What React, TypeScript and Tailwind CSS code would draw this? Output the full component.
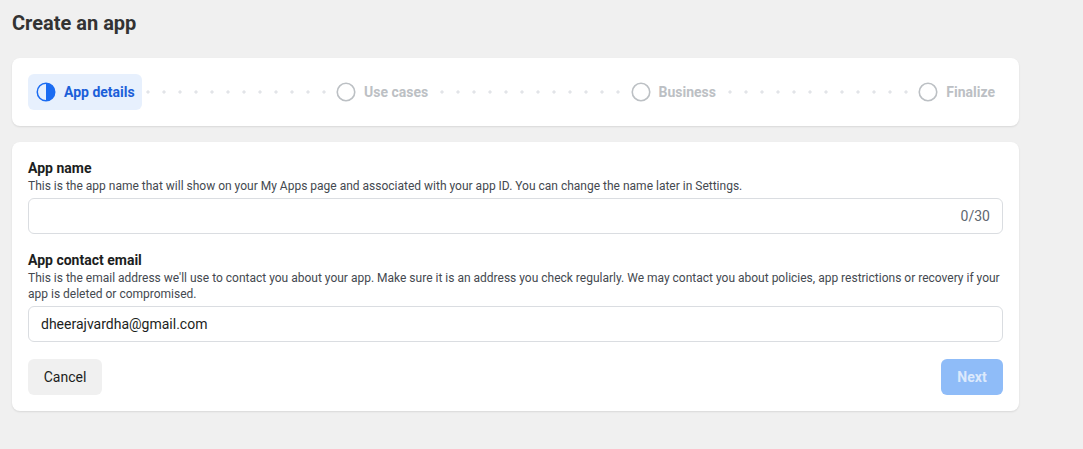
import React from "react";

function HalfCircle() {
  return (
    <svg width="20" height="20" viewBox="0 0 20 20">
      <circle cx="10" cy="10" r="8.75" fill="none" stroke="#1b6cf2" strokeWidth="1.5" />
      <path d="M10 1.25 A8.75 8.75 0 0 1 10 18.75 Z" fill="#1b6cf2" />
    </svg>
  );
}

function EmptyCircle() {
  return (
    <svg width="20" height="20" viewBox="0 0 20 20">
      <circle cx="10" cy="10" r="8.75" fill="none" stroke="#bcc0c4" strokeWidth="1.6" />
    </svg>
  );
}

function Dots() {
  return (
    <div className="flex-1 h-1 bg-[radial-gradient(circle,#e2e4e8_1.4px,transparent_1.8px)] bg-[length:16px_4px] bg-repeat-x bg-[position:-2px_center]" />
  );
}

function Step({ label }: { label: string }) {
  return (
    <div className="flex items-center gap-2 h-9 px-2">
      <EmptyCircle />
      <span className="text-[14px] font-bold text-[#bcc0c4]">{label}</span>
    </div>
  );
}

export default function App() {
  return (
    <div className="min-h-[449px] bg-[#f0f0f0] pl-3 pt-[10px] font-['Roboto',sans-serif]">
      <h1 className="text-[20px] leading-[26px] font-bold text-[#333]">Create an app</h1>

      {/* Stepper */}
      <div className="mt-[22px] w-[1007px] rounded-lg bg-white px-4 py-4 shadow-[0_1px_2px_rgba(0,0,0,0.1)]">
        <div className="flex items-center">
          <div className="flex items-center gap-2 h-9 pl-2 pr-[7px] rounded-md bg-[#e7f0fd]">
            <HalfCircle />
            <span className="text-[14px] font-bold text-[#1b5fd9]">App details</span>
          </div>
          <Dots />
          <Step label="Use cases" />
          <Dots />
          <Step label="Business" />
          <Dots />
          <Step label="Finalize" />
        </div>
      </div>

      {/* Form */}
      <div className="mt-4 w-[1007px] rounded-lg bg-white px-4 pt-4 pb-4 shadow-[0_1px_2px_rgba(0,0,0,0.1)]">
        <div className="text-[14px] leading-5 font-bold text-[#1c1e21]">App name</div>
        <div className="text-[12px] leading-4 text-[#444950]">
          This is the app name that will show on your My Apps page and associated with your app ID. You can change the name later in Settings.
        </div>
        <div className="mt-1 flex items-center h-9 rounded-md border border-[#dadde1] px-3">
          <input className="flex-1 outline-none text-[15px] text-[#1c1e21] bg-transparent" />
          <span className="text-[14px] text-[#606770]">0/30</span>
        </div>

        <div className="mt-4 text-[14px] leading-5 font-bold text-[#1c1e21]">App contact email</div>
        <div className="text-[12px] leading-4 text-[#444950]">
          This is the email address we'll use to contact you about your app. Make sure it is an address you check regularly. We may contact you about policies, app restrictions or recovery if your app is deleted or compromised.
        </div>
        <div className="mt-1 flex items-center h-9 rounded-md border border-[#dadde1] px-3">
          <span className="text-[14px] text-[#1c1e21]">dheerajvardha@gmail.com</span>
        </div>

        <div className="mt-[17px] flex items-center justify-between">
          <button className="h-9 w-[74px] rounded-md bg-[#f0f0f0] text-[14px] text-[#1c1e21]">Cancel</button>
          <button className="h-9 w-[62px] rounded-md bg-[#8fbcf8] text-[14px] font-bold text-[#dce9fc]">Next</button>
        </div>
      </div>
    </div>
  );
}
